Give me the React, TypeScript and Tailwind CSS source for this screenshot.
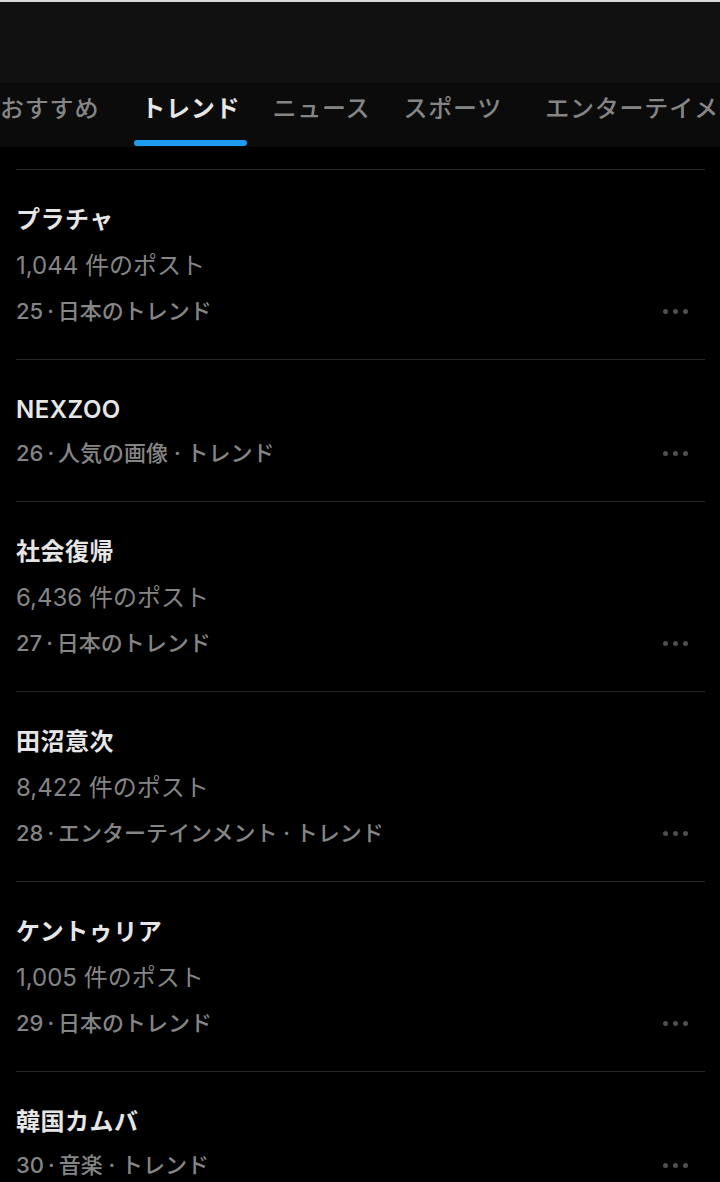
const font = { fontFamily: 'Inter, "Noto Sans CJK JP", sans-serif' };

interface Trend {
  title: string;
  count?: string;
  meta: string;
}

const trends: Trend[] = [
  { title: 'プラチャ', count: '1,044件のポスト', meta: '25 · 日本のトレンド' },
  { title: 'NEXZOO', meta: '26 · 人気の画像 · トレンド' },
  { title: '社会復帰', count: '6,436件のポスト', meta: '27 · 日本のトレンド' },
  { title: '田沼意次', count: '8,422件のポスト', meta: '28 · エンターテインメント · トレンド' },
  { title: 'ケントゥリア', count: '1,005件のポスト', meta: '29 · 日本のトレンド' },
  { title: '韓国カムバ', meta: '30 · 音楽 · トレンド' },
];

function Dots() {
  return (
    <div className="flex items-center gap-[5px] mr-[17px]">
      <span className="w-[5px] h-[5px] rounded-full bg-[#4f4f4f]" />
      <span className="w-[5px] h-[5px] rounded-full bg-[#4f4f4f]" />
      <span className="w-[5px] h-[5px] rounded-full bg-[#4f4f4f]" />
    </div>
  );
}

function TrendRow({ t }: { t: Trend }) {
  const [num, ...rest] = t.meta.split(' · ');
  return (
    <div className="border-t border-[#262626] pt-[28px] pb-[27px]">
      <div className="h-[44px] flex items-center text-[24px] font-semibold tracking-[0.5px] text-[#e6e6e6]">{t.title}</div>
      {t.count && (
        <div className="h-[48px] flex items-center text-[24px] text-[#858585]">
          {t.count.replace('件', ' 件')}
        </div>
      )}
      <div className="h-[42px] flex items-center justify-between">
        <div className="text-[22px] font-medium text-[#858585] whitespace-nowrap">
          {num}
          <span className="mx-[4px]">·</span>
          {rest.join(' · ')}
        </div>
        <Dots />
      </div>
    </div>
  );
}

export default function App() {
  return (
    <div className="w-[720px] h-[1182px] overflow-hidden bg-black" style={font}>
      <div className="h-[2px] bg-[#d9d9d9]" />
      <div className="h-[81px] bg-[#111111]" />
      <div className="h-[64px] bg-[#0b0b0b] flex items-start whitespace-nowrap overflow-hidden text-[24px] font-medium tracking-[0.8px] text-[#858585]">
        <div className="h-[64px] flex items-center pb-[12px]">おすすめ</div>
        <div className="ml-[35px] h-[64px] flex flex-col items-center">
          <div className="flex-1 flex items-center px-[7px] pb-[5px] text-[#e6e6e6] font-bold">トレンド</div>
          <div className="h-[6px] w-full rounded-full bg-[#1d9bf0] mb-[1px]" />
        </div>
        <div className="ml-[25px] h-[64px] flex items-center pb-[12px]">ニュース</div>
        <div className="ml-[33px] h-[64px] flex items-center pb-[12px]">スポーツ</div>
        <div className="ml-[43px] h-[64px] flex items-center pb-[12px]">エンターテイメント</div>
      </div>
      <div className="h-[22px]" />
      <div className="ml-[16px] mr-[15px]">
        {trends.map((t) => (
          <TrendRow key={t.title} t={t} />
        ))}
      </div>
    </div>
  );
}
